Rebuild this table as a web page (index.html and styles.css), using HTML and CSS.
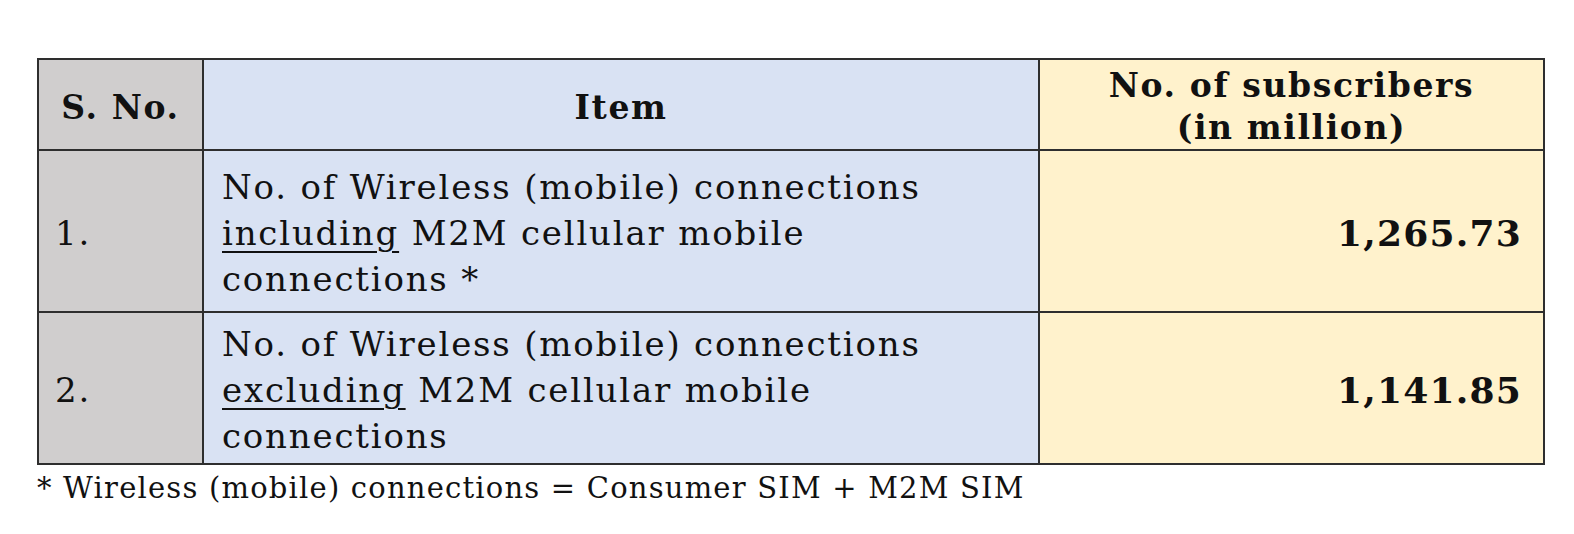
FILE: index.html
```html
<!DOCTYPE html>
<html>
<head>
<meta charset="utf-8">
<link rel="stylesheet" href="styles.css">
</head>
<body>
<div class="wrap">
  <table class="subs">
    <colgroup>
      <col class="c-sno">
      <col class="c-item">
      <col class="c-val">
    </colgroup>
    <thead>
      <tr>
        <th class="sno">S. No.</th>
        <th class="item">Item</th>
        <th class="val">No. of subscribers<br>(in million)</th>
      </tr>
    </thead>
    <tbody>
      <tr class="r1">
        <td class="sno">1.</td>
        <td class="item">No. of Wireless (mobile) connections<br><u>including</u> M2M cellular mobile<br>connections *</td>
        <td class="val num">1,265.73</td>
      </tr>
      <tr class="r2">
        <td class="sno">2.</td>
        <td class="item">No. of Wireless (mobile) connections<br><u>excluding</u> M2M cellular mobile<br>connections</td>
        <td class="val num">1,141.85</td>
      </tr>
    </tbody>
  </table>
  <p class="note">* Wireless (mobile) connections = Consumer SIM + M2M SIM</p>
</div>
</body>
</html>
```

FILE: styles.css
```css
html, body {
  margin: 0;
  padding: 0;
  background: #ffffff;
}
body {
  font-family: "DejaVu Serif", "Liberation Serif", serif;
  color: #111111;
}
.wrap {
  padding: 58px 0 0 37px;
}
.subs {
  border-collapse: collapse;
  width: 1506px;
  table-layout: fixed;
}
.c-sno { width: 165px; }
.c-item { width: 836px; }
.c-val { width: 505px; }
.subs th, .subs td {
  border: 2px solid #2e2e2e;
  vertical-align: middle;
  padding: 0;
}
.subs th {
  font-weight: bold;
  font-size: 33px;
  letter-spacing: 1.6px;
  line-height: 42px;
  height: 83px;
  padding-top: 6px;
  text-align: center;
}
.subs th.val {
  padding-top: 5px;
}
.subs td {
  font-size: 34px;
  letter-spacing: 1.8px;
  line-height: 46px;
  padding-top: 4px;
}
.r1 td { height: 156px; }
.r2 td { height: 146px; }
.sno { background: #d0cece; }
.item { background: #d9e2f3; }
.val { background: #fff2cc; }
td.sno { padding-left: 16px; }
td.item { padding-left: 18px; }
td.item u {
  text-decoration-thickness: 2px;
  text-underline-offset: 6px;
}
td.num {
  text-align: right;
  font-weight: bold;
  font-size: 36px;
  letter-spacing: 1.2px;
  padding-right: 21px;
}
.note {
  margin: 6px 0 0 0;
  font-size: 29px;
  letter-spacing: 1.2px;
  line-height: 34px;
}
```
